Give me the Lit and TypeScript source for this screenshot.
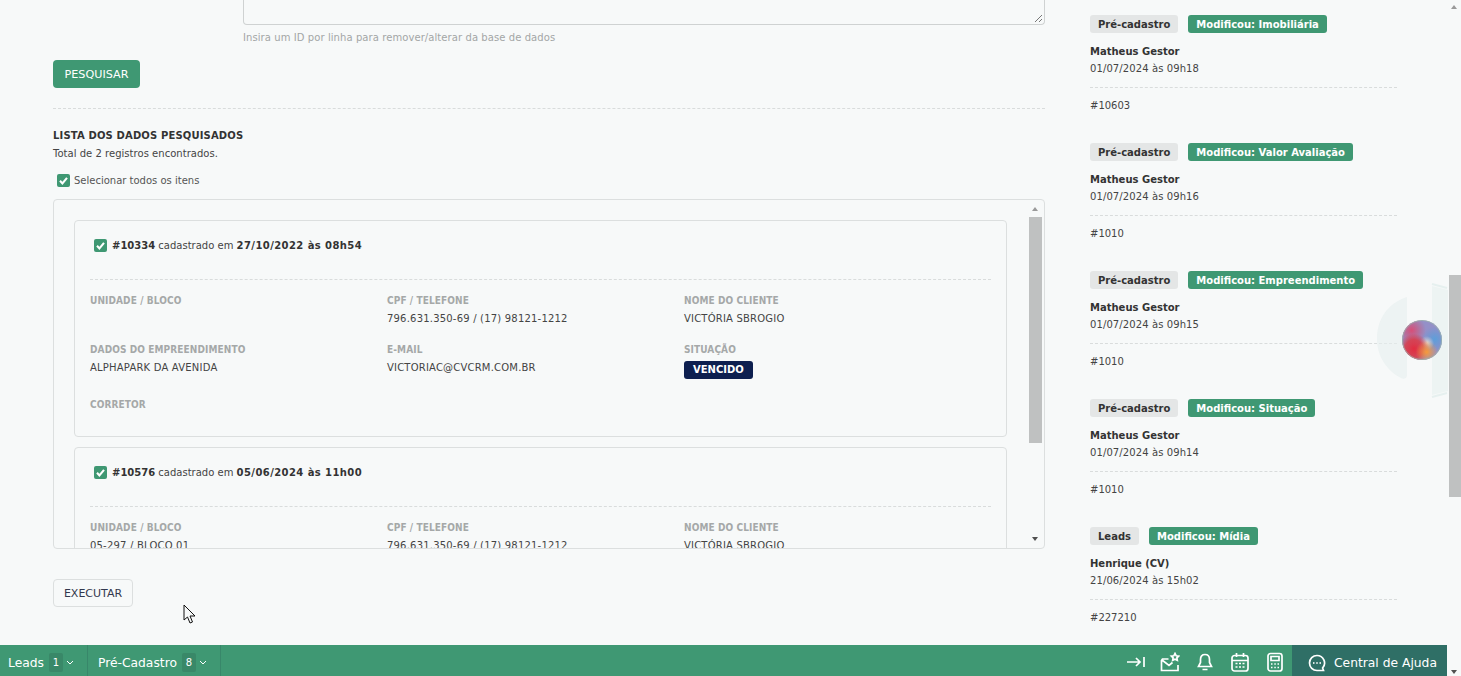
import { LitElement, html, css, svg } from "lit";
import { customElement } from "lit/decorators.js";

const check = html`<span class="cb"><svg viewBox="0 0 13 13" width="13" height="13"><path d="M3 6.8 5.400 9.400 10 3.800" fill="none" stroke="#fff" stroke-width="2.100"/></svg></span>`;

const history = [
  ["Pré-cadastro", "Modificou: Imobiliária", "Matheus Gestor", "01/07/2024 às 09h18", "#10603"],
  ["Pré-cadastro", "Modificou: Valor Avaliação", "Matheus Gestor", "01/07/2024 às 09h16", "#1010"],
  ["Pré-cadastro", "Modificou: Empreendimento", "Matheus Gestor", "01/07/2024 às 09h15", "#1010"],
  ["Pré-cadastro", "Modificou: Situação", "Matheus Gestor", "01/07/2024 às 09h14", "#1010"],
  ["Leads", "Modificou: Mídia", "Henrique (CV)", "21/06/2024 às 15h02", "#227210"],
];

const icons = [
  svg`<path d="M2 10h13M11 6l4 4-4 4M19 5v10" />`,
  svg`<path d="M1.500 8v10.500h16.500V13M1.500 8l1-1h6M2 8l7 5.500 3.500-3"/><path d="M15 1.500l1.200 2.300 2.400.3-1.700 1.700.4 2.500-2.300-1.100-2.300 1.100.4-2.500-1.700-1.700 2.400-.3z"/>`,
  svg`<path d="M10 2.500c-3 0-4.500 2.200-4.500 5v3L3.500 14.500h13L14.500 10.500v-3c0-2.800-1.500-5-4.500-5zM7.500 17.500h5"/>`,
  svg`<rect x="2" y="3.500" width="16" height="15.500" rx="2.500"/><path d="M2 8.500h16M6.500 1v4M13.500 1v4M5.500 11.500h2M9 11.500h2M12.500 11.500h2M5.500 15h2M9 15h2M12.500 15h2"/>`,
  svg`<rect x="3" y="1.500" width="14" height="17.500" rx="2.500"/><path d="M6 4.500h8v4H6zM6 12h1.500M9.300 12h1.500M12.500 12h1.500M6 15.500h1.500M9.300 15.500h1.500M12.500 15.500h1.500"/>`,
];

@customElement("app-root")
export class AppRoot extends LitElement {
  static styles = css`
    :host { display: block; height: 676px; overflow: hidden; position: relative; background: #f7f9f9; color: #3a3a3a;
      font-family: "DejaVu Sans", sans-serif; font-size: 10px; }
    * { box-sizing: border-box; }
    .page { display: flex; height: 645px; overflow: hidden; }
    .main { width: 992px; margin-left: 53px; flex: none; }
    .textarea { margin-left: 190px; height: 25px; border: 1px solid #cfd2d2; border-top: 0; border-radius: 0 0 4px 4px; position: relative; }
    .grip { position: absolute; right: 1px; bottom: 1px; }
    .hint { margin: 7px 0 0 190px; line-height: 12px; color: #a3a6a6; letter-spacing: .08px; height: 12px; }
    .btn { display: flex; align-items: center; justify-content: center; border-radius: 4px; }
    .search { margin-top: 16px; width: 87px; height: 28px; background: #3f9873; color: #fff; font-size: 11.200px; }
    .dash { border-top: 1px dashed #d9dcdc; }
    .rule { margin-top: 20px; width: 992px; }
    .title { margin-top: 21px; font-weight: 700; line-height: 12px; color: #333; letter-spacing: .15px; }
    .total { margin-top: 6px; line-height: 12px; color: #444; letter-spacing: .03px; }
    .all { margin: 13px 0 0 4px; display: flex; align-items: center; gap: 4px; height: 14px; color: #555; }
    .cb { width: 13px; height: 13px; background: #3f9873; border-radius: 2px; display: inline-block; flex: none; }
    .cb svg { display: block; }
    .list { margin-top: 12px; width: 992px; height: 350px; border: 1px solid #dcdfdf; border-radius: 4px; overflow: hidden; padding: 20px 0 0 20px; position: relative; }
    .card { width: 933px; height: 217px; border: 1px solid #dcdfdf; border-radius: 4px; padding: 0 15px; margin-bottom: 10px; }
    .card-head { display: flex; align-items: center; gap: 5px; height: 59px; padding: 0 4px 10px; color: #444; border-bottom: 1px dashed #d9dcdc; }
    .card-head b { color: #333; }
    .card-head .when { letter-spacing: .42px; }
    .fields { display: grid; grid-template-columns: repeat(3, 297px); padding-top: 15px; }
    .field { height: 49px; }
    .field.tall { height: 55px; }
    .label { font-family: "DejaVu Sans Condensed", "DejaVu Sans", sans-serif; font-stretch: condensed; font-weight: 700; color: #a5a8a8; line-height: 12px; letter-spacing: .1px; }
    .value { margin-top: 6px; line-height: 12px; color: #444; letter-spacing: .2px; }
    .badge { display: inline-block; margin-top: 5px; background: #0d1f4f; color: #fff; font-weight: 700; height: 18px; line-height: 18px; padding: 0 9px; border-radius: 3px; }
    .track { position: absolute; top: 0; bottom: 0; right: 2px; width: 13px; }
    .thumb { position: absolute; top: 17px; left: 0; width: 13px; height: 226px; background: #bfc1c1; }
    .arrow-up, .arrow-down { position: absolute; left: 3px; width: 0; height: 0; border-left: 3.500px solid transparent; border-right: 3.500px solid transparent; }
    .arrow-up { top: 7px; border-bottom: 4px solid #9a9a9a; }
    .arrow-down { bottom: 7px; border-top: 4px solid #505050; }
    .run { margin-top: 30px; width: 80px; height: 28px; border: 1px solid #dcdfdf; color: #33384d; font-size: 11px; }
    .side { width: 307px; margin-left: 45px; flex: none; padding-top: 15px; }
    .item { height: 128px; }
    .tags { display: flex; gap: 10px; }
    .tag { height: 18px; line-height: 19px; padding: 0 8px; border-radius: 3px; font-weight: 700; background: #e4e6e6; color: #333; }
    .tag.green { background: #3f9873; color: #fff; }
    .name { margin-top: 13px; font-weight: 700; line-height: 12px; color: #333; }
    .date { margin-top: 5px; line-height: 12px; color: #444; letter-spacing: .1px; }
    .item .dash { margin-top: 12px; }
    .id { margin-top: 12px; line-height: 12px; color: #444; }
    .bar { display: flex; height: 31px; width: 1447px; background: #3f9873; color: #fff; align-items: center; font-size: 12.300px; }
    .tab { display: flex; align-items: center; height: 31px; padding: 4px 13px 0 8px; border-right: 1px solid #38876a; gap: 5px; }
    .tab + .tab { padding: 4px 13px 0 10px; }
    .tab svg { margin-left: -2px; }
    .count { width: 14px; height: 19px; background: #398868; border-radius: 2px; display: flex; align-items: center; justify-content: center; font-size: 10px; }
    .tools { margin-left: auto; display: flex; align-items: center; gap: 15px; padding: 3px 7px 0 0; }
    .tools svg { display: block; fill: none; stroke: #fff; stroke-width: 1.700; }
    .help { width: 155px; height: 31px; background: #2f6f66; display: flex; align-items: center; gap: 8px; padding: 4px 0 0 16px; }
    .help svg { fill: none; stroke: #fff; stroke-width: 1.700; flex: none; }
    .scroll { position: absolute; top: 0; right: 0; width: 12px; height: 676px; }
    .scroll .thumb2 { position: absolute; top: 275px; left: 0; width: 12px; height: 222px; background: #bfc1c1; }
    .scroll .arrow-up { top: 5px; left: 2px; }
    .scroll .arrow-down { bottom: 2px; left: 2px; }
    .widget { position: absolute; left: 1376px; top: 281px; }
    .cursor { position: absolute; left: 183px; top: 604px; }
  `;

  card(id: string, date: string, unit: string) {
    return html`<div class="card">
      <div class="card-head">${check}<span><b>#${id}</b> cadastrado em <b class="when">${date}</b></span></div>
      <div class="fields">
        <div class="field"><div class="label">UNIDADE / BLOCO</div><div class="value">${unit}</div></div>
        <div class="field"><div class="label">CPF / TELEFONE</div><div class="value">796.631.350-69 / (17) 98121-1212</div></div>
        <div class="field"><div class="label">NOME DO CLIENTE</div><div class="value">VICTÓRIA SBROGIO</div></div>
        <div class="field tall"><div class="label">DADOS DO EMPREENDIMENTO</div><div class="value">ALPHAPARK DA AVENIDA</div></div>
        <div class="field tall"><div class="label">E-MAIL</div><div class="value">VICTORIAC@CVCRM.COM.BR</div></div>
        <div class="field tall"><div class="label">SITUAÇÃO</div><span class="badge">VENCIDO</span></div>
        <div class="field"><div class="label">CORRETOR</div></div>
      </div>
    </div>`;
  }

  render() {
    return html`
      <div class="page">
        <div class="main">
          <div class="textarea"><svg class="grip" width="10" height="10" viewBox="0 0 10 10"><path d="M9 2 2 9M9 6 6 9" stroke="#777" fill="none"/></svg></div>
          <div class="hint">Insira um ID por linha para remover/alterar da base de dados</div>
          <div class="btn search">PESQUISAR</div>
          <div class="dash rule"></div>
          <div class="title">LISTA DOS DADOS PESQUISADOS</div>
          <div class="total">Total de 2 registros encontrados.</div>
          <div class="all">${check}<span>Selecionar todos os itens</span></div>
          <div class="list">
            ${this.card("10334", "27/10/2022 às 08h54", "")}
            ${this.card("10576", "05/06/2024 às 11h00", "05-297 / BLOCO 01")}
            <div class="track"><div class="arrow-up"></div><div class="thumb"></div><div class="arrow-down"></div></div>
          </div>
          <div class="btn run">EXECUTAR</div>
        </div>
        <div class="side">
          ${history.map(([a, b, n, d, i]) => html`<div class="item">
            <div class="tags"><span class="tag">${a}</span><span class="tag green">${b}</span></div>
            <div class="name">${n}</div>
            <div class="date">${d}</div>
            <div class="dash"></div>
            <div class="id">${i}</div>
          </div>`)}
        </div>
      </div>
      <div class="bar">
        <div class="tab">Leads <span class="count">1</span><svg width="8" height="6" viewBox="0 0 8 6"><path d="M1 1l3 3 3-3" fill="none" stroke="#fff"/></svg></div>
        <div class="tab">Pré-Cadastro <span class="count">8</span><svg width="8" height="6" viewBox="0 0 8 6"><path d="M1 1l3 3 3-3" fill="none" stroke="#fff"/></svg></div>
        <div class="tools">${icons.map((p) => html`<svg width="20" height="20" viewBox="0 0 20 20">${p}</svg>`)}</div>
        <div class="help">
          <svg width="18" height="18" viewBox="0 0 18 18"><path d="M9 1.500a7.500 7.500 0 1 0 0 15h6.500l-.9-2.500A7.500 7.500 0 0 0 9 1.500z"/><path d="M5.200 9h1.200M8.400 9h1.200M11.600 9h1.200" stroke-width="2"/></svg>
          <span>Central de Ajuda</span>
        </div>
      </div>
      <div class="scroll"><div class="arrow-up"></div><div class="thumb2"></div><div class="arrow-down"></div></div>
      <svg class="widget" width="72" height="120" viewBox="0 0 72 120">
        <defs>
          <radialGradient id="g1" cx="30%" cy="72%" r="38%"><stop offset="0" stop-color="#e22c40"/><stop offset=".6" stop-color="#e0353f" stop-opacity=".8"/><stop offset="1" stop-color="#e0353f" stop-opacity="0"/></radialGradient>
          <radialGradient id="g2" cx="62%" cy="80%" r="28%"><stop offset="0" stop-color="#f79a3a"/><stop offset="1" stop-color="#f59a3c" stop-opacity="0"/></radialGradient>
          <radialGradient id="g3" cx="24%" cy="26%" r="36%"><stop offset="0" stop-color="#d84e78"/><stop offset="1" stop-color="#d2506e" stop-opacity="0"/></radialGradient>
          <radialGradient id="g4" cx="82%" cy="48%" r="32%"><stop offset="0" stop-color="#5d9fda"/><stop offset="1" stop-color="#5b9bd8" stop-opacity="0"/></radialGradient>
          <radialGradient id="g5" cx="62%" cy="58%" r="18%"><stop offset="0" stop-color="#e6dcd4"/><stop offset="1" stop-color="#e6dcd4" stop-opacity="0"/></radialGradient>
        </defs>
        <path d="M31 16C12 22 1 38 1 58c0 17 10 32 24 39 3 2 6 0 6-3z" fill="#e6eeef" fill-opacity=".6"/>
        <path d="M56 5v109l16-4V9z" fill="#e6f0ef" fill-opacity=".6"/>
        <path d="M56 3l15 4M56 116l15-4" fill="none" stroke="#e6f0ef" stroke-width="2"/>
        <circle cx="46" cy="59" r="20" fill="#9490c8"/>
        <circle cx="46" cy="59" r="20" fill="url(#g4)"/>
        <circle cx="46" cy="59" r="20" fill="url(#g3)"/>
        <circle cx="46" cy="59" r="20" fill="url(#g5)"/>
        <circle cx="46" cy="59" r="20" fill="url(#g1)"/>
        <circle cx="46" cy="59" r="20" fill="url(#g2)"/>
        <circle cx="46" cy="59" r="19.500" fill="none" stroke="#9db8a8" stroke-opacity=".7"/>
      </svg>
      <svg class="cursor" width="13" height="20" viewBox="0 0 13 20"><path d="M1 1v15l3.500-3 2.500 6 2.500-1-2.500-6h5z" fill="#f7f9f9" stroke="#111"/></svg>
    `;
  }
}
